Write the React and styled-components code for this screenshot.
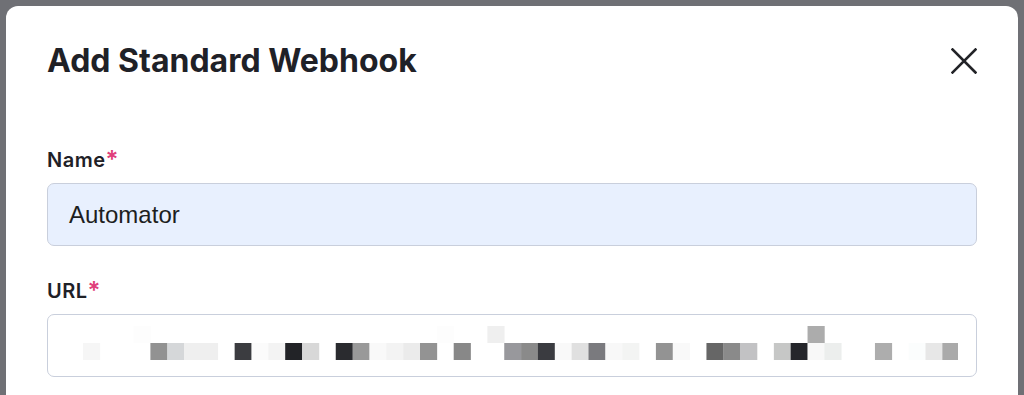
import styled, { createGlobalStyle } from "styled-components";

const GlobalStyle = createGlobalStyle`
  html, body {
    margin: 0;
    height: 395px;
    overflow: hidden;
    background: #6f7075;
  }
  * { box-sizing: border-box; }
`;

const Backdrop = styled.div`
  padding: 6px 6px 0 6px;
  height: 395px;
`;

const Modal = styled.div`
  background: #ffffff;
  border-radius: 12px 12px 0 0;
  height: 600px;
  padding: 37px 41px 0 41px;
  display: flex;
  flex-direction: column;
`;

const Header = styled.div`
  display: flex;
  align-items: center;
  justify-content: space-between;
  margin-bottom: 69px;
`;

const Title = styled.h2`
  margin: 0;
  font-family: Inter, "Liberation Sans", sans-serif;
  font-weight: 700;
  font-size: 32px;
  line-height: 36px;
  color: #1f2127;
`;

const CloseButton = styled.button`
  border: none;
  background: none;
  padding: 0;
  width: 26px;
  height: 26px;
  display: flex;
  cursor: pointer;
`;

const Form = styled.div`
  display: flex;
  flex-direction: column;
  gap: 33px;
`;

const Field = styled.div`
  display: flex;
  flex-direction: column;
  gap: 11px;
`;

const Label = styled.label`
  font-family: Inter, "Liberation Sans", sans-serif;
  font-weight: 600;
  font-size: 20px;
  line-height: 24px;
  letter-spacing: 0.5px;
  color: #1f2127;
`;

const Required = styled.span`
  color: #e0407a;
  font-size: 24px;
  line-height: 0;
  position: relative;
  top: 1px;
`;

const Input = styled.div`
  height: 63px;
  border: 1px solid #c9cfdc;
  border-radius: 7px;
  background: ${(p) => (p.$autofill ? "#e8f0fe" : "#ffffff")};
  display: flex;
  align-items: ${(p) => (p.$masked ? "flex-start" : "center")};
  padding: ${(p) => (p.$masked ? "11px 0 0 35px" : "0 0 0 21px")};
  font-family: "Liberation Sans", Arial, sans-serif;
  font-size: 24px;
  color: #1d1e21;
`;

const CELL = 16.85;

const mainRow = {
  0: "#f6f6f6", 4: "#929292", 5: "#d5d7d9", 6: "#efefef", 7: "#efefef",
  9: "#3b3c40", 10: "#fbfbfb", 11: "#f3f3f3", 12: "#222327", 13: "#d8d8d8",
  15: "#2a2b2f", 16: "#999999", 17: "#f9f9f9", 18: "#f3f3f3", 19: "#ebebeb",
  20: "#939393", 22: "#888888", 25: "#98989c", 26: "#8a8a8a", 27: "#3a3b40",
  28: "#f9f9f9", 29: "#e0e0e0", 30: "#7a7a7e", 31: "#f8f8f8", 32: "#f3f4f3",
  34: "#939393", 35: "#f9f9f9", 37: "#666666", 38: "#8a8a8a", 39: "#c2c2c4",
  41: "#c6c7c6", 42: "#25262b", 43: "#f8f8f8", 44: "#eceeed", 47: "#adadad",
  49: "#fbfdfd", 50: "#e7e7e7", 51: "#aaaaaa",
};

const upperRow = { 3: "#fdfdfd", 21: "#fdfdfd", 24: "#efefef", 43: "#acacac" };

function MaskedUrl() {
  return (
    <svg width="875" height="34" viewBox="0 0 875 34">
      {Object.entries(upperRow).map(([i, c]) => (
        <rect key={"u" + i} x={i * CELL} y={0} width={CELL + 0.3} height={17} fill={c} />
      ))}
      {Object.entries(mainRow).map(([i, c]) => (
        <rect
          key={"m" + i}
          x={i * CELL}
          y={17}
          width={Math.min(CELL + 0.3, 875 - i * CELL)}
          height={17}
          fill={c}
        />
      ))}
    </svg>
  );
}

function CloseIcon() {
  return (
    <svg width="26" height="26" viewBox="0 0 26 26">
      <path
        d="M1.5 1.5 L24.5 24.5 M24.5 1.5 L1.5 24.5"
        stroke="#222327"
        strokeWidth="2.6"
        strokeLinecap="square"
      />
    </svg>
  );
}

export default function App() {
  return (
    <>
      <GlobalStyle />
      <Backdrop>
        <Modal>
          <Header>
            <Title>Add Standard Webhook</Title>
            <CloseButton aria-label="Close">
              <CloseIcon />
            </CloseButton>
          </Header>
          <Form>
            <Field>
              <Label>
                Name<Required>*</Required>
              </Label>
              <Input $autofill>Automator</Input>
            </Field>
            <Field>
              <Label>
                URL<Required>*</Required>
              </Label>
              <Input $masked>
                <MaskedUrl />
              </Input>
            </Field>
          </Form>
        </Modal>
      </Backdrop>
    </>
  );
}
